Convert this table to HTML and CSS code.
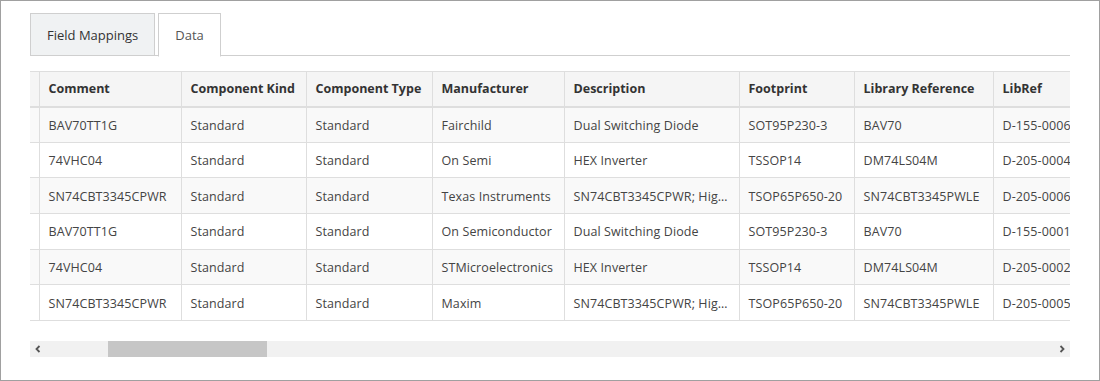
FILE: index.html
```html
<!DOCTYPE html>
<html lang="en">
  <head>
    <meta charset="UTF-8" />
    <meta name="viewport" content="width=device-width, initial-scale=1.0" />
    <title>Data Preview</title>
    <link rel="stylesheet" href="styles.css">
  </head>
  <body>
    <div class="frame">
      <div class="tabs">
        <div class="tab">Field Mappings</div>
        <div class="tab active">Data</div>
      </div>

      <div class="grid-wrap">
        <table class="grid">
          <colgroup>
            <col style="width: 9px" />
            <col style="width: 142px" />
            <col style="width: 125px" />
            <col style="width: 126px" />
            <col style="width: 132px" />
            <col style="width: 175px" />
            <col style="width: 115px" />
            <col style="width: 139px" />
            <col style="width: 120px" />
          </colgroup>
          <thead>
            <tr>
              <th class="stub"></th>
              <th>Comment</th>
              <th>Component Kind</th>
              <th>Component Type</th>
              <th>Manufacturer</th>
              <th>Description</th>
              <th>Footprint</th>
              <th>Library Reference</th>
              <th>LibRef</th>
            </tr>
          </thead>
          <tbody>
            <tr>
              <td class="stub"></td>
              <td>BAV70TT1G</td>
              <td>Standard</td>
              <td>Standard</td>
              <td>Fairchild</td>
              <td>Dual Switching Diode</td>
              <td>SOT95P230-3</td>
              <td>BAV70</td>
              <td>D-155-0006</td>
            </tr>
            <tr>
              <td class="stub"></td>
              <td>74VHC04</td>
              <td>Standard</td>
              <td>Standard</td>
              <td>On Semi</td>
              <td>HEX Inverter</td>
              <td>TSSOP14</td>
              <td>DM74LS04M</td>
              <td>D-205-0004</td>
            </tr>
            <tr>
              <td class="stub"></td>
              <td>SN74CBT3345CPWR</td>
              <td>Standard</td>
              <td>Standard</td>
              <td>Texas Instruments</td>
              <td>SN74CBT3345CPWR; High Speed Bus Switch</td>
              <td>TSOP65P650-20</td>
              <td>SN74CBT3345PWLE</td>
              <td>D-205-0006</td>
            </tr>
            <tr>
              <td class="stub"></td>
              <td>BAV70TT1G</td>
              <td>Standard</td>
              <td>Standard</td>
              <td>On Semiconductor</td>
              <td>Dual Switching Diode</td>
              <td>SOT95P230-3</td>
              <td>BAV70</td>
              <td>D-155-0001</td>
            </tr>
            <tr>
              <td class="stub"></td>
              <td>74VHC04</td>
              <td>Standard</td>
              <td>Standard</td>
              <td>STMicroelectronics</td>
              <td>HEX Inverter</td>
              <td>TSSOP14</td>
              <td>DM74LS04M</td>
              <td>D-205-0002</td>
            </tr>
            <tr>
              <td class="stub"></td>
              <td>SN74CBT3345CPWR</td>
              <td>Standard</td>
              <td>Standard</td>
              <td>Maxim</td>
              <td>SN74CBT3345CPWR; High Speed Bus Switch</td>
              <td>TSOP65P650-20</td>
              <td>SN74CBT3345PWLE</td>
              <td>D-205-0005</td>
            </tr>
          </tbody>
        </table>
      </div>

      <div class="hscroll">
        <span class="arrow">
          <svg width="8" height="8" viewBox="0 0 8 8"><path d="M5.5 1 L2.5 4 L5.5 7" fill="none" stroke="#555" stroke-width="1.8"/></svg>
        </span>
        <div class="track"><div class="thumb"></div></div>
        <span class="arrow">
          <svg width="8" height="8" viewBox="0 0 8 8"><path d="M2.5 1 L5.5 4 L2.5 7" fill="none" stroke="#555" stroke-width="1.8"/></svg>
        </span>
      </div>
    </div>
  </body>
</html>
```

FILE: styles.css
```css
* {
  box-sizing: border-box;
}
body {
  margin: 0;
  font-family: "Open Sans", "Noto Sans", sans-serif;
  font-size: 13px;
  color: #333;
}
.frame {
  width: 1100px;
  height: 381px;
  border: 1px solid #a0a0a0;
  padding: 12px 29px 0 29px;
}

/* tabs */
.tabs {
  display: flex;
  gap: 3px;
  border-bottom: 1px solid #cfcfcf;
  height: 43px;
}
.tab {
  height: 43px;
  padding: 0 16px;
  display: flex;
  align-items: center;
  background-color: #f0f2f3;
  border: 1px solid #cfcfcf;
  color: #333;
}
.tab.active {
  background-color: #fff;
  border-bottom-color: #fff;
  color: #555;
  height: 44px;
}

/* table */
.grid-wrap {
  margin-top: 15px;
  width: 1040px;
  overflow: hidden;
}
.grid {
  border-collapse: collapse;
  table-layout: fixed;
  width: 1083px;
  font-size: 12.5px;
}
.grid th,
.grid td {
  text-align: left;
  padding: 0 9px;
  white-space: nowrap;
  overflow: hidden;
  text-overflow: ellipsis;
  border-left: 1px solid #dedede;
  border-bottom: 1px solid #dedede;
}
.grid th:first-child,
.grid td:first-child {
  border-left: none;
}
.grid th {
  height: 35px;
  padding-bottom: 1px;
  background-color: #f5f5f5;
  border-top: 1px solid #dedede;
  border-bottom: 2px solid #dedede;
  font-weight: 700;
  color: #333;
}
.grid td {
  height: 35.7px;
  padding-top: 1px;
  letter-spacing: 0.1px;
  color: #444;
}
.grid tbody tr:nth-child(odd) td {
  background-color: #f9f9f9;
}
.grid .stub {
  padding: 0;
}

/* horizontal scroll bar */
.hscroll {
  margin-top: 20px;
  width: 1040px;
  height: 16px;
  display: flex;
  align-items: center;
  background-color: #f1f1f1;
}
.arrow {
  width: 16px;
  height: 16px;
  display: flex;
  align-items: center;
  justify-content: center;
}
.track {
  flex: 1;
  height: 16px;
}
.thumb {
  margin-left: 62px;
  width: 159px;
  height: 16px;
  background-color: #c6c6c6;
}
```
